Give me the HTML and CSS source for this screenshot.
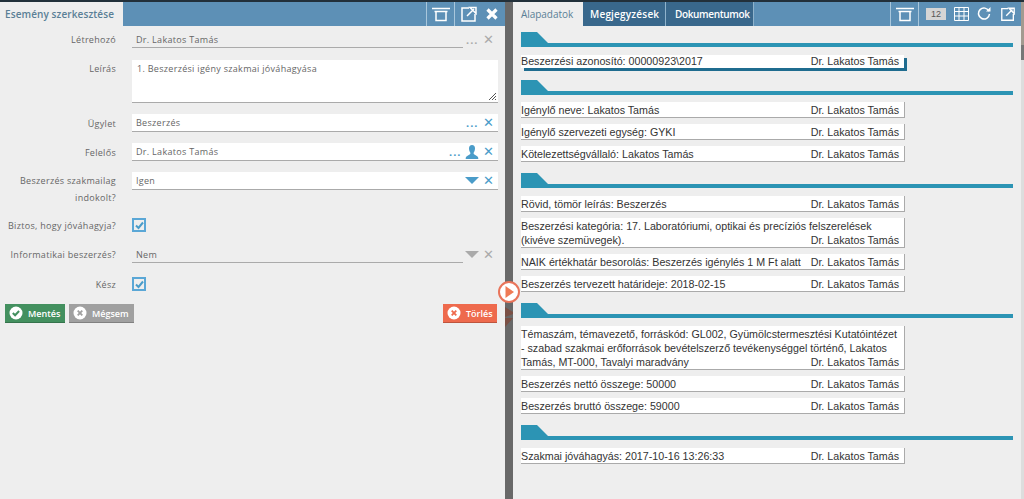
FILE: index.html
```html
<!DOCTYPE html>
<html lang="hu">
<head>
<meta charset="utf-8">
<title>Esemény szerkesztése</title>
<link rel="stylesheet" href="styles.css">
</head>
<body>
<div class="app">
  <section class="left">
    <header class="bar">
      <div class="tab active tab-e">Esemény szerkesztése</div>
      <div class="spacer"></div>
      <div class="tool sep"><svg width="22" height="16" viewBox="0 0 22 16"><path d="M2 2.500h18M4.500 5.500h13M6 5.500v9h10v-9" class="st"/></svg></div>
      <div class="tool sep"><svg width="18" height="16" viewBox="0 0 18 16"><path d="M9 2H2v13h13V8" class="st"/><path d="M7 10l7-7M10 1.500h6v6z" class="st"/></svg></div>
      <div class="tool close"><svg width="14" height="14" viewBox="0 0 14 14"><path d="M2.500 2.500l9 9M11.500 2.500l-9 9" class="x3"/></svg></div>
    </header>
    <form class="form">
      <div class="row r-creator">
        <label class="lbl">Létrehozó</label>
        <div class="field plain"><span class="val">Dr. Lakatos Tamás</span></div>
        <span class="dots grey">...</span><span class="cross grey">✕</span>
      </div>
      <div class="row r-desc">
        <label class="lbl">Leírás</label>
        <div class="area">1. Beszerzési igény szakmai jóváhagyása<svg class="grip" width="9" height="9" viewBox="0 0 9 9"><path d="M1 8l7-7M4 8l4-4M7 8l1-1" stroke="#555" fill="none"/></svg></div>
      </div>
      <div class="row r-deal">
        <label class="lbl">Ügylet</label>
        <div class="field box"><span class="val">Beszerzés</span><span class="dots">...</span><span class="cross">✕</span></div>
      </div>
      <div class="row r-owner">
        <label class="lbl">Felelős</label>
        <div class="field box"><span class="val">Dr. Lakatos Tamás</span><span class="dots">...</span>
          <svg class="user" width="14" height="14" viewBox="0 0 14 14"><path d="M7 0c2 0 3 1.500 3 3.500 0 2-1 3.500-1.500 4.500 0 1.500 2 2 4 3.500.7.600.8 1.500.8 2.500H.7c0-1 .1-1.900.8-2.500 2-1.500 4-2 4-3.500C5 7 4 5.500 4 3.500 4 1.500 5 0 7 0z" fill="#4a9cc9"/></svg>
          <span class="cross">✕</span></div>
      </div>
      <div class="row r-just">
        <label class="lbl two">Beszerzés szakmailag<br>indokolt?</label>
        <div class="field box"><span class="val">Igen</span><span class="tri"></span><span class="cross">✕</span></div>
      </div>
      <div class="row r-sure">
        <label class="lbl">Biztos, hogy jóváhagyja?</label>
        <span class="check"><svg width="11" height="11" viewBox="0 0 11 11"><path d="M2 5.500l2.500 2.500L9 2.500" fill="none" stroke="#4a9cc9" stroke-width="2"/></svg></span>
      </div>
      <div class="row r-it">
        <label class="lbl">Informatikai beszerzés?</label>
        <div class="field plain"><span class="val">Nem</span></div>
        <span class="tri grey-tri"></span><span class="cross grey">✕</span>
      </div>
      <div class="row r-done">
        <label class="lbl">Kész</label>
        <span class="check"><svg width="11" height="11" viewBox="0 0 11 11"><path d="M2 5.500l2.500 2.500L9 2.500" fill="none" stroke="#4a9cc9" stroke-width="2"/></svg></span>
      </div>
      <div class="actions">
        <button type="button" class="btn green"><svg width="14" height="14" viewBox="0 0 14 14"><circle cx="7" cy="7" r="6.500" fill="#fff"/><path d="M3.800 7l2.300 2.300 4-4.300" fill="none" stroke="#43905f" stroke-width="2"/></svg>Mentés</button>
        <button type="button" class="btn gray"><svg width="14" height="14" viewBox="0 0 14 14"><circle cx="7" cy="7" r="6.500" fill="#fff"/><path d="M4.700 4.700l4.600 4.600M9.300 4.700l-4.600 4.600" stroke="#a0a0a0" stroke-width="1.800"/></svg>Mégsem</button>
        <button type="button" class="btn red"><svg width="14" height="14" viewBox="0 0 14 14"><circle cx="7" cy="7" r="6.500" fill="#fff"/><path d="M4.700 4.700l4.600 4.600M9.300 4.700l-4.600 4.600" stroke="#ee6a4d" stroke-width="1.800"/></svg>Törlés</button>
      </div>
    </form>
  </section>

  <div class="divider">
    <span class="play"><svg width="26" height="26" viewBox="0 0 26 26"><circle cx="13" cy="13" r="10" fill="#fff" stroke="#e9745a" stroke-width="2"/><path d="M9.500 7l8.500 6-8.500 6z" fill="#ef7a55"/></svg></span>
    <span class="ghost"><svg width="8" height="22" viewBox="0 0 8 22"><path d="M0 0l8 5v2l-8 3zM0 11l8 0-8 9z" fill="#7a4f44"/></svg></span>
  </div>

  <section class="right">
    <header class="bar">
      <div class="tab active tab-a">Alapadatok</div>
      <div class="tab dark tab-m">Megjegyzések</div>
      <div class="tab dark tab-d">Dokumentumok</div>
      <div class="spacer"></div>
      <div class="tool sep wide"><svg width="22" height="16" viewBox="0 0 22 16"><path d="M2 2.500h18M4.500 5.500h13M6 5.500v9h10v-9" class="st"/></svg></div>
      <div class="count">12</div>
      <svg class="rt r-grid" width="15" height="14" viewBox="0 0 15 14"><path d="M.5.500h14v13H.5zM.5 4.500h14M.5 9h14M5 .500v13M10 .500v13" class="st1"/></svg>
      <svg class="rt r-ref" width="14" height="14" viewBox="0 0 14 14"><path d="M12 4.200A5.500 5.500 0 1 0 12.500 7" class="st"/><path d="M9 4.500h4.500V0z" fill="#fff"/></svg>
      <svg class="rt r-ext" width="16" height="16" viewBox="0 0 18 16"><path d="M9 2H2v13h13V8" class="st"/><path d="M7 10l7-7M10 1.500h6v6z" class="st"/></svg>
    </header>
    <div class="content">
      <div class="head"></div>
      <div class="item main"><span>Beszerzési azonosító: 00000923\2017</span><span class="who">Dr. Lakatos Tamás</span></div>

      <div class="head"></div>
      <div class="item"><span>Igénylő neve: Lakatos Tamás</span><span class="who">Dr. Lakatos Tamás</span></div>
      <div class="item"><span>Igénylő szervezeti egység: GYKI</span><span class="who">Dr. Lakatos Tamás</span></div>
      <div class="item"><span>Kötelezettségvállaló: Lakatos Tamás</span><span class="who">Dr. Lakatos Tamás</span></div>

      <div class="head"></div>
      <div class="item"><span>Rövid, tömör leírás: Beszerzés</span><span class="who">Dr. Lakatos Tamás</span></div>
      <div class="item"><span>Beszerzési kategória: 17. Laboratóriumi, optikai és precíziós felszerelések (kivéve szemüvegek).</span><span class="who">Dr. Lakatos Tamás</span></div>
      <div class="item"><span>NAIK értékhatár besorolás: Beszerzés igénylés 1 M Ft alatt</span><span class="who">Dr. Lakatos Tamás</span></div>
      <div class="item"><span>Beszerzés tervezett határideje: 2018-02-15</span><span class="who">Dr. Lakatos Tamás</span></div>

      <div class="head"></div>
      <div class="item"><span>Témaszám, témavezető, forráskód: GL002, Gyümölcstermesztési Kutatóintézet - szabad szakmai erőforrások bevételszerző tevékenységgel történő, Lakatos Tamás, MT-000, Tavalyi maradvány</span><span class="who">Dr. Lakatos Tamás</span></div>
      <div class="item"><span>Beszerzés nettó összege: 50000</span><span class="who">Dr. Lakatos Tamás</span></div>
      <div class="item"><span>Beszerzés bruttó összege: 59000</span><span class="who">Dr. Lakatos Tamás</span></div>

      <div class="head"></div>
      <div class="item"><span>Szakmai jóváhagyás: 2017-10-16 13:26:33</span><span class="who">Dr. Lakatos Tamás</span></div>
    </div>
  </section>
</div>
</body>
</html>
```
FILE: styles.css
```css
* { box-sizing: border-box; }
html, body { margin: 0; height: 100%; overflow: hidden; }
body { background: #eee; font-family: "Liberation Sans", Arial, sans-serif; color: #333; }
.app { display: flex; height: 499px; padding-top: 2px; background: linear-gradient(#22303a 2px, #eee 2px); }
.left { width: 505px; flex: none; }
.right { flex: 1; min-width: 0; padding-right: 3px; background: linear-gradient(#a39a90 43px, #777 43px, #777 58px, #ddd 58px); }
.divider { width: 8px; flex: none; background: #686868; position: relative; }
.play { position: absolute; left: -9px; top: 277px; width: 26px; height: 26px; }
.ghost { position: absolute; left: 0; top: 305px; width: 8px; height: 22px; }
.bar { display: flex; height: 24px; background: #5d90b6; align-items: stretch; }
.spacer { flex: 1; }
.tab { display: flex; align-items: center; font-family: "Open Sans", sans-serif; font-size: 10px; font-weight: 600; color: #fff; white-space: nowrap; }
.tab.active { background: #eee; color: #5a7f96; }
.tab-e { width: 123px; padding-left: 5px; letter-spacing: .1px; }
.tab-a { width: 70px; padding-left: 8px; font-weight: 400; letter-spacing: -.05px; }
.tab.dark { background: #39688c; }
.tab-m { width: 83px; padding-left: 7px; letter-spacing: .2px; border-right: 1px solid #8fb3cc; }
.tab-d { width: 88px; padding-left: 9px; letter-spacing: -.35px; border-right: 1px solid #8fb3cc; }
.tool { width: 28px; display: flex; align-items: center; justify-content: center; }
.tool.sep { border-left: 1px solid #a9c7dc; }
.tool.close { width: 23px; padding-right: 3px; }
.tool.wide { width: 29px; border-right: 1px solid #a9c7dc; }
.st { fill: none; stroke: #fff; stroke-width: 1.500; }
.st1 { fill: none; stroke: #fff; stroke-width: 1; }
.x3 { stroke: #fff; stroke-width: 3.200; }
.count { width: 20px; height: 12px; margin: 6px 8px 0 7px; background: #d5d5d5; color: #555; font-size: 9px; line-height: 12px; text-align: center; }
.rt { align-self: center; flex: none; }
.r-grid { margin-right: 8px; }
.r-ref { margin-right: 9px; }
.r-ext { margin-right: 5px; }

.form { font-family: "Open Sans", sans-serif; font-size: 9px; color: #666; padding-right: 7px; }
.row { display: flex; align-items: center; position: relative; }
.lbl { width: 116px; flex: none; text-align: right; letter-spacing: .3px; margin-right: 16px; }
.lbl.two { line-height: 17px; align-self: flex-start; }
.field { flex: 1; min-width: 0; display: flex; align-items: center; height: 18px; }
.val { flex: 1; padding-left: 4px; letter-spacing: .3px; }
.plain { border-bottom: 1px solid #aaa; height: 17px; flex: none; width: 331px; }
.box { background: #fff; border-bottom: 1px solid #aaa; padding-right: 3px; }
.area { flex: 1; height: 43px; background: #fff; border-bottom: 1px solid #aaa; padding: 2px 5px; letter-spacing: .3px; position: relative; }
.grip { position: absolute; right: 1px; bottom: 1px; }
.dots { color: #4a9cc9; font-weight: 700; font-size: 11px; line-height: 8px; width: 12px; margin-right: 4px; letter-spacing: 1px; text-align: center; }
.cross { color: #4a9cc9; font-family: "DejaVu Sans", sans-serif; font-size: 13px; line-height: 14px; width: 13px; text-align: center; }
.grey { color: #aaa; }
.row > .dots { margin: 0 4px 0 3px; }
.tri { width: 0; height: 0; border-left: 7px solid transparent; border-right: 7px solid transparent; border-top: 7px solid #4a9cc9; margin-right: 3px; }
.grey-tri { border-top-color: #aaa; margin: 0 3px 0 2px; }
.user { margin-right: 3px; }
.check { width: 14px; height: 14px; border: 2px solid #5aa7d6; background: #eee; display: flex; align-items: center; justify-content: center; }
.check svg { flex: none; }

.r-creator { margin-top: 5px; height: 17px; }
.r-desc { margin-top: 12px; align-items: flex-start; }
.r-desc .lbl { padding-top: 2px; }
.r-deal { margin-top: 11px; }
.r-owner { margin-top: 11px; }
.r-just { margin-top: 11px; height: 18px; align-items: flex-start; }
.r-sure { margin-top: 28px; height: 14px; }
.r-it { margin-top: 14px; height: 17px; }
.r-done { margin-top: 14px; height: 14px; }
.actions { display: flex; gap: 4px; margin: 13px 1px 0 5px; }
.btn { height: 19px; border: 0; border-bottom: 1px solid rgba(0,0,0,.2); display: flex; align-items: center; gap: 5px; padding: 0 4px; font-family: "Open Sans", sans-serif; font-size: 9px; font-weight: 600; color: #fff; }
.green { background: #43905f; width: 60px; }
.gray { background: #a0a0a0; width: 65px; }
.red { background: #ee6a4d; width: 54px; margin-left: auto; }

.content { height: 473px; padding: 6px 8px 0 8px; background: #eee; font-size: 10.700px; color: #333; }
.head { height: 15px; width: 492px; margin-top: 11px; background: linear-gradient(#2c94b4, #2c94b4) 0 11px / 100% 4px no-repeat; position: relative; }
.head:first-child { margin-top: 0; }
.head::before { content: ""; position: absolute; left: 0; top: 0; width: 27px; height: 15px; background: #2c94b4; clip-path: polygon(0 0, 16px 0, 27px 11px, 27px 15px, 0 15px); }
.item { display: flow-root; width: 384px; margin-top: 6px; line-height: 14px; padding: 1px 5px 0 0; background: #fff; border-right: 1px solid #aaa; border-bottom: 1px solid #aaa; }
.head + .item { margin-top: 8px; }
.who { float: right; white-space: nowrap; }
.item.main { width: 383px; height: 13px; line-height: 13px; padding-top: 0; border: 0; box-shadow: 3px 3px 0 #1f6c8f; }
.main + .head { margin-top: 12px; }
.main + .head + .item { margin-top: 7px; }
```
